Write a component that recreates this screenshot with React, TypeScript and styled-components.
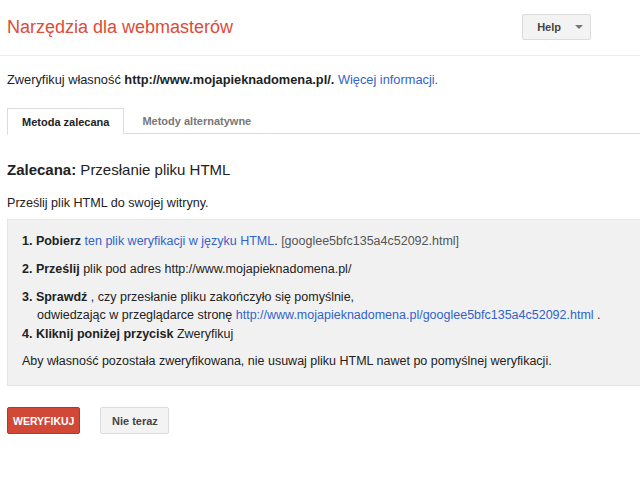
import React from 'react';
import styled, { createGlobalStyle } from 'styled-components';

const GlobalStyle = createGlobalStyle`
  html, body {
    margin: 0;
    padding: 0;
    background: #ffffff;
    font-family: 'Liberation Sans', Arial, sans-serif;
    color: #222222;
    overflow: hidden;
  }
`;

const App = () => {
  return (
    <>
      <GlobalStyle />
      <Page>
        <Header>
          <Title>Narzędzia dla webmasterów</Title>
          <HelpButton>
            <span>Help</span>
            <Caret />
          </HelpButton>
        </Header>
        <Content>
          <Intro>
            Zweryfikuj własność <b>http://www.mojapieknadomena.pl/.</b>{' '}
            <Link>Więcej informacji.</Link>
          </Intro>
          <Tabs>
            <Tab active>Metoda zalecana</Tab>
            <Tab>Metody alternatywne</Tab>
            <TabFiller />
          </Tabs>
          <Heading>
            <b>Zalecana:</b> Przesłanie pliku HTML
          </Heading>
          <Lead>Prześlij plik HTML do swojej witryny.</Lead>
          <StepsBox>
            <Step>
              <b>1. Pobierz</b> <Link>ten plik weryfikacji w języku HTML</Link>.{' '}
              <Muted>[googlee5bfc135a4c52092.html]</Muted>
            </Step>
            <Step>
              <b>2. Prześlij</b> plik pod adres http://www.mojapieknadomena.pl/
            </Step>
            <Step>
              <b>3. Sprawdź</b> , czy przesłanie pliku zakończyło się pomyślnie,
              <Indent>
                odwiedzając w przeglądarce stronę{' '}
                <Link>http://www.mojapieknadomena.pl/googlee5bfc135a4c52092.html</Link> .
              </Indent>
            </Step>
            <Step tight>
              <b>4. Kliknij poniżej przycisk</b> Zweryfikuj
            </Step>
            <Note>
              Aby własność pozostała zweryfikowana, nie usuwaj pliku HTML nawet po pomyślnej
              weryfikacji.
            </Note>
          </StepsBox>
          <Actions>
            <Button primary>WERYFIKUJ</Button>
            <Button>Nie teraz</Button>
          </Actions>
        </Content>
      </Page>
    </>
  );
};

export default App;

const Page = styled.div`
  width: 640px;
  height: 480px;
  overflow: hidden;
`;

const Header = styled.header`
  height: 55px;
  display: flex;
  align-items: flex-start;
  justify-content: space-between;
  border-bottom: 1px solid #ebebeb;
  padding: 0 49px 0 7px;
`;

const Title = styled.h1`
  margin: 16px 0 0;
  font-size: 18px;
  font-weight: normal;
  color: #dd4b39;
  line-height: 22px;
`;

const HelpButton = styled.div`
  margin-top: 14px;
  width: 69px;
  height: 26px;
  display: flex;
  align-items: center;
  justify-content: flex-end;
  gap: 14px;
  padding-right: 7px;
  box-sizing: border-box;
  background: #f3f3f3;
  border: 1px solid #dcdcdc;
  border-radius: 2px;
  font-size: 11px;
  font-weight: bold;
  color: #444444;
`;

const Caret = styled.span`
  width: 0;
  height: 0;
  border-left: 4px solid transparent;
  border-right: 4px solid transparent;
  border-top: 4px solid #777777;
`;

const Content = styled.main`
  padding-left: 7px;
`;

const Intro = styled.p`
  margin: 16px 0 0;
  font-size: 12.8px;
  line-height: 16px;
  color: #222222;
`;

const Link = styled.span`
  color: #3263cc;
`;

const Muted = styled.span`
  color: #555555;
`;

const Tabs = styled.div`
  display: flex;
  align-items: flex-end;
  margin-top: 19px;
  height: 27px;
`;

const Tab = styled.div<{ active?: boolean }>`
  box-sizing: border-box;
  display: flex;
  align-items: center;
  font-size: 11px;
  font-weight: bold;
  color: ${(p) => (p.active ? '#222222' : '#777777')};
  background: #ffffff;
  border: 1px solid ${(p) => (p.active ? '#dcdcdc' : 'transparent')};
  border-bottom: ${(p) => (p.active ? '1px solid #ffffff' : '1px solid #dcdcdc')};
  margin-bottom: ${(p) => (p.active ? '-1px' : '0')};
  height: ${(p) => (p.active ? '27px' : '26px')};
  padding: 0 ${(p) => (p.active ? '14px' : '15px')} 0 ${(p) => (p.active ? '14px' : '17px')};
`;

const TabFiller = styled.div`
  flex: 1;
  border-bottom: 1px solid #dcdcdc;
`;

const Heading = styled.h2`
  margin: 26px 0 0;
  font-size: 15px;
  font-weight: normal;
  line-height: 20px;
  color: #222222;
`;

const Lead = styled.p`
  margin: 15px 0 0;
  font-size: 12.6px;
  line-height: 16px;
  color: #222222;
`;

const StepsBox = styled.div`
  margin-top: 8px;
  width: 660px;
  box-sizing: border-box;
  background: #f1f1f1;
  border: 1px solid #e5e5e5;
  padding: 12px 14px 15px 14px;
  font-size: 12.5px;
  line-height: 18px;
  color: #222222;
`;

const Step = styled.div<{ tight?: boolean }>`
  margin-top: ${(p) => (p.tight ? '1px' : '10px')};

  &:first-child {
    margin-top: 0;
  }
`;

const Indent = styled.div`
  padding-left: 15px;
`;

const Note = styled.div`
  margin-top: 9px;
`;

const Actions = styled.div`
  display: flex;
  gap: 20px;
  margin-top: 21px;
`;

const Button = styled.div<{ primary?: boolean }>`
  height: 27px;
  box-sizing: border-box;
  padding: 0 ${(p) => (p.primary ? '5px' : '7px')};
  display: flex;
  align-items: center;
  justify-content: center;
  font-size: ${(p) => (p.primary ? '10.5px' : '11px')};
  font-weight: bold;
  border-radius: 2px;
  color: ${(p) => (p.primary ? '#ffffff' : '#444444')};
  background: ${(p) => (p.primary ? '#d14836' : '#f3f3f3')};
  border: 1px solid ${(p) => (p.primary ? '#c1331f' : '#dcdcdc')};
  min-width: ${(p) => (p.primary ? '73px' : '69px')};
`;
